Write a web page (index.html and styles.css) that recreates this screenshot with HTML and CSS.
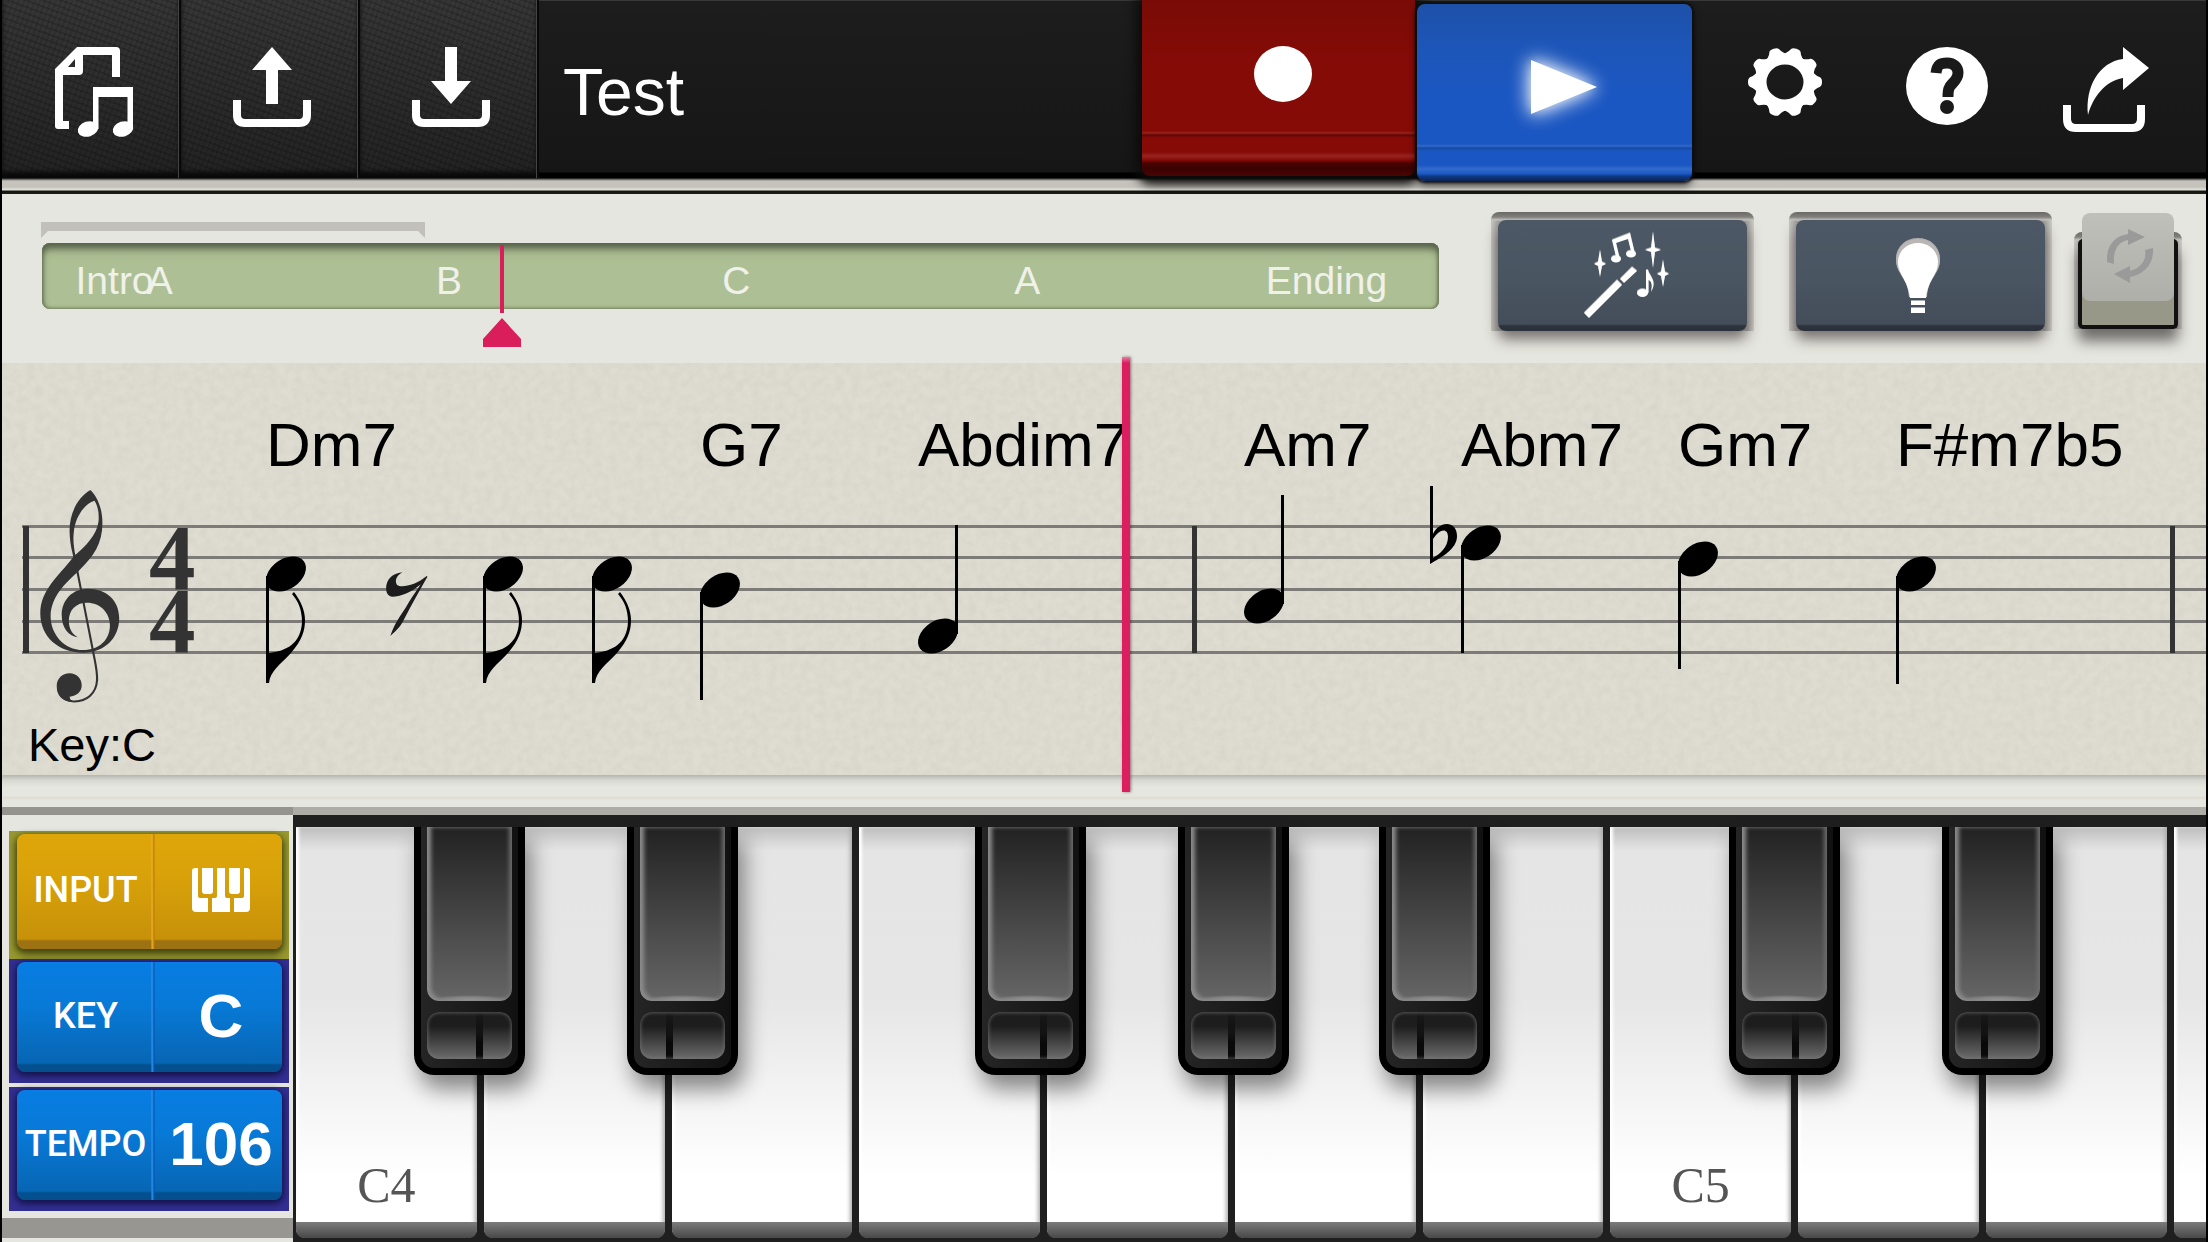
FILE: index.html
```html
<!DOCTYPE html>
<html lang="en">
<head>
<meta charset="utf-8">
<meta name="viewport" content="width=device-width, initial-scale=1">
<title>Test</title>
<link rel="stylesheet" href="styles.css">
</head>
<body>
<div class="app">
  <header class="toolbar">
    <button class="tool leather" aria-label="Songs">
      <svg width="80" height="90" viewBox="-2 0 80 90" fill="#fff">
        <path fill-rule="evenodd" d="M0 22 L22 0 H61 q4 0 4 4 V30 H57 V8 H28 V24 q0 4 -4 4 H8 V74 H14 V82 H3 q-3 0 -3 -3 Z M13 20 H20 V12 Z"/>
        <path d="M38 40 H78 V82 H72.500 V50 H43.500 V82 H38 Z"/>
        <ellipse cx="33" cy="82" rx="10.500" ry="7.500" transform="rotate(-18 33 82)"/>
        <ellipse cx="68" cy="82" rx="10.500" ry="7.500" transform="rotate(-18 68 82)"/>
      </svg>
    </button>
    <button class="tool leather" aria-label="Upload">
      <svg width="78" height="80" viewBox="0 0 78 80" fill="#fff">
        <path d="M39 0 L59 23 H45 V57 H33 V23 H19 Z"/>
        <path d="M4 53 V68 q0 8 8 8 H66 q8 0 8 -8 V53" fill="none" stroke="#fff" stroke-width="8"/>
      </svg>
    </button>
    <button class="tool leather" aria-label="Download">
      <svg width="78" height="80" viewBox="0 0 78 80" fill="#fff">
        <path d="M33 0 H45 V34 H59 L39 57 L19 34 H33 Z"/>
        <path d="M4 53 V68 q0 8 8 8 H66 q8 0 8 -8 V53" fill="none" stroke="#fff" stroke-width="8"/>
      </svg>
    </button>
    <h1 class="song-title">Test</h1>
    <button class="transport record" aria-label="Record">
      <svg width="58" height="56" viewBox="0 0 58 56"><ellipse cx="29" cy="28" rx="29" ry="28" fill="#fff"/></svg>
    </button>
    <button class="transport play" aria-label="Play">
      <svg class="glow" width="66" height="54" viewBox="0 0 66 54"><path d="M0 0 L66 27 L0 54 Z" fill="#fff"/></svg>
    </button>
    <nav class="menu">
      <button class="tool" aria-label="Settings">
        <svg width="74" height="70" viewBox="-37 -37 74 74" preserveAspectRatio="none">
          <defs><path id="tooth" d="M22 -13 L29 -9 Q32 -6 35 -5 Q37 -4 37 0 Q37 4 35 5 Q32 6 29 9 L22 13 Z" fill="#fff"/></defs>
          <circle r="24.500" fill="none" stroke="#fff" stroke-width="12"/>
          <use href="#tooth"/><use href="#tooth" transform="rotate(36)"/><use href="#tooth" transform="rotate(72)"/><use href="#tooth" transform="rotate(108)"/><use href="#tooth" transform="rotate(144)"/><use href="#tooth" transform="rotate(180)"/><use href="#tooth" transform="rotate(216)"/><use href="#tooth" transform="rotate(252)"/><use href="#tooth" transform="rotate(288)"/><use href="#tooth" transform="rotate(324)"/>
        </svg>
      </button>
      <button class="tool" aria-label="Help">
        <svg width="82" height="78" viewBox="0 0 82 78">
          <ellipse cx="41" cy="39" rx="41" ry="39" fill="#fff"/>
          <path d="M30 26 C31 17 35 16 41 16 C48 16 52 20 52 26 C52 31 49 34 46 37 C43 40 42 42 42 50" fill="none" stroke="#1a1a1a" stroke-width="11"/>
          <ellipse cx="41" cy="60" rx="7" ry="7" fill="#1a1a1a"/>
        </svg>
      </button>
      <button class="tool" aria-label="Share">
        <svg width="92" height="86" viewBox="0 0 92 86">
          <path d="M60 0 L86 21 L60 43 V31 C42 34 30 50 25 68 C22 40 36 15 60 12 Z" fill="#fff"/>
          <path d="M4 58 V72 q0 9 9 9 H69 q9 0 9 -9 V58" fill="none" stroke="#fff" stroke-width="8"/>
        </svg>
      </button>
    </nav>
  </header>

  <section class="controls">
    <div class="timeline">
      <svg class="loop-range" width="384" height="16" viewBox="0 0 384 16"><path d="M0 0 H384 V16 L377 9 H7 L0 16 Z" fill="#c1c0ba"/></svg>
      <div class="track">
        <span class="part" style="left:2.4%">Intro</span>
        <span class="part" style="left:7.5%">A</span>
        <span class="part" style="left:28.2%">B</span>
        <span class="part" style="left:48.7%">C</span>
        <span class="part" style="left:69.6%">A</span>
        <span class="part" style="left:87.6%">Ending</span>
        <svg class="marker" style="left:32.9%" width="40" height="104" viewBox="0 0 40 104"><path d="M18 2 H22 V70 H18 Z M20 75 L39 96 V105 H1 V96 Z" fill="#d91e5b"/></svg>
      </div>
    </div>
    <div class="slot">
      <button class="pad" aria-label="Arrange">
        <svg width="78" height="88" viewBox="0 0 78 88" fill="#fff">
          <path d="M0 81 L33 48 L38 53 L5 86 Z M36 47 L48 35 L53 39 L40 51 Z"/>
          <path d="M28 8 L46 1 L51 22 L48 23 L44 7 L32 11 L36 28 L33 29 Z"/>
          <ellipse cx="32" cy="27" rx="5" ry="3.500"/><ellipse cx="47" cy="22" rx="5" ry="3.500"/>
          <path d="M69 0 L71 16 L77 18 L71 20 L69 36 L67 20 L61 18 L67 16 Z M16 18 L18 30 L22 32 L18 34 L16 45 L14 34 L10 32 L14 30 Z M79 28 L81 40 L85 42 L81 44 L79 55 L77 44 L73 42 L77 40 Z"/>
          <path d="M62 38 H64 C65 44 74 49 67 60 C69 52 67 49 64.500 48 V61 H62 Z"/><ellipse cx="58.500" cy="61" rx="5.500" ry="4"/>
        </svg>
      </button>
    </div>
    <div class="slot">
      <button class="pad" aria-label="Hint">
        <svg width="50" height="76" viewBox="0 0 50 76">
          <path d="M22 1 C9 1 0 10 0 22 C0 36 12 40 13 59 H31 C32 40 44 36 44 22 C44 10 35 1 22 1 Z" fill="#b9b6b5"/>
          <path d="M22 5 C10 5 2 14 2 24 C2 37 12 41 14 60 H30 C32 41 42 37 42 24 C42 14 34 5 22 5 Z M15 63 H29 V67 H15 Z M15 70 H29 V75 H15 Z" fill="#fff"/>
        </svg>
      </button>
    </div>
    <div class="slot small">
      <button class="toggle" aria-label="Repeat">
        <span class="cap">
          <svg width="46" height="54" viewBox="0 0 46 54" fill="#9a9a9a">
            <path d="M0 33 C-1 16 8 7 21 5 V0 L38 8 L21 16 V11 C11 13 6 21 7 35 Z"/>
            <path d="M46 19 C47 36 37 45 23 48 V54 L7 45 L23 37 V42 C34 39 40 31 38 21 Z"/>
          </svg>
        </span>
      </button>
    </div>
  </section>

  <main class="score">
    <svg class="paper" width="100%" height="100%" aria-hidden="true">
      <filter id="grain" x="0" y="0" width="100%" height="100%">
        <feTurbulence type="fractalNoise" baseFrequency="0.12" numOctaves="3" seed="4"/>
        <feColorMatrix values="0 0 0 0 0.5  0 0 0 0 0.49  0 0 0 0 0.43  0.35 0 0 0 -0.1"/>
      </filter>
      <rect width="100%" height="100%" filter="url(#grain)"/>
    </svg>
    <svg class="staff" width="100%" height="412" aria-hidden="true">
      <defs>
        <ellipse id="head" cx="20" cy="0" rx="22" ry="15" transform="rotate(-35 20 0)"/>
        <g id="eighth">
          <use href="#head"/>
          <path d="M0 2 H3 V79 C20 77 35 70 36 48 C36 35 32 27 26 20 L28 18 C35 27 39 37 39 46 C39 57 36 66 25 79 C14 91 4 97 3 109 H0 Z"/>
        </g>
        <g id="down"><use href="#head"/><path d="M0 2 H3 V110 H0 Z"/></g>
        <g id="up"><use href="#head"/><path d="M37 -2 H40 V-111 H37 Z"/></g>
      </defs>
      <g fill="#7c7b77">
        <rect x="20" y="162" width="100%" height="3"/><rect x="20" y="193" width="100%" height="3"/><rect x="20" y="225" width="100%" height="3"/><rect x="20" y="257" width="100%" height="3"/><rect x="20" y="288" width="100%" height="3"/>
      </g>
      <g fill="#333">
        <rect x="21" y="163" width="6" height="127"/><rect x="1190" y="163" width="5" height="127"/><rect x="2168" y="163" width="5" height="127"/>
        <text class="meter" x="147" y="226">4</text>
        <text class="meter" x="147" y="289">4</text>
        <g transform="translate(-1 37) scale(.3571 .3333)">
          <path fill-rule="evenodd" d="M250 270 C215 292 191 340 192 395 C193 430 199 455 203 470 C160 530 110 570 110 640 C110 710 160 758 230 758 C290 758 331 715 331 655 C331 600 295 566 243 566 C200 566 170 600 170 645 C170 685 190 708 215 712 C198 700 190 685 190 662 C190 630 210 608 240 608 C280 608 305 640 305 675 C305 720 275 750 230 750 C175 750 139 700 139 650 C139 590 180 550 218 512 C260 470 284 430 284 370 C284 325 270 290 250 270 Z M262 302 C272 320 275 340 273 365 C268 405 235 440 208 465 C204 440 201 420 204 395 C208 350 235 310 262 302 Z"/>
          <path d="M204 460 L258 755 C263 785 270 810 269 840 C267 880 240 907 200 904 C180 902 160 888 160 860" fill="none" stroke="#333" stroke-width="6"/>
          <path d="M192 820 C212 820 226 836 226 856 C226 876 212 888 192 890 L196 905 C170 903 156 885 156 858 C156 836 172 820 192 820 Z"/>
        </g>
      </g>
      <path transform="translate(-2 37) scale(.3571 .3333)" fill="#1c1c1c" d="M1127 517 C1108 528 1105 545 1112 555 C1125 565 1165 555 1195 528 L1197 530 C1165 590 1140 640 1128 665 C1118 685 1105 695 1093 708 C1105 670 1120 650 1135 625 C1148 600 1165 575 1178 553 C1150 580 1120 590 1098 590 C1082 588 1080 570 1082 555 C1088 530 1105 520 1127 517 Z"/>
      <use href="#eighth" x="264" y="211"/><use href="#eighth" x="481" y="211"/><use href="#eighth" x="590" y="211"/>
      <use href="#down" x="698" y="227"/><use href="#up" x="916" y="273"/>
      <use href="#up" x="1242" y="243"/><use href="#down" x="1459" y="180"/><use href="#down" x="1676" y="196"/><use href="#down" x="1894" y="211"/>
      <path fill-rule="evenodd" d="M1428 123 H1431 V171 C1438 157 1455 158 1455 173 C1455 186 1440 194 1428 201 Z M1431 176 V195 C1438 191 1446 184 1446 174 C1446 164 1437 166 1431 176 Z"/>
    </svg>
    <ol class="chords">
      <li>Dm7</li><li>G7</li><li>Abdim7</li><li>Am7</li><li>Abm7</li><li>Gm7</li><li>F#m7b5</li>
    </ol>
    <p class="key-label">Key:C</p>
    <div class="playhead"></div>
  </main>
  <div class="ledge"></div>

  <section class="bottom">
    <aside class="settings">
      <div class="well amber"><button class="setting"><span class="name">INPUT</span><span class="value"><svg width="58" height="44" viewBox="0 0 58 44" fill="#fff" role="img" aria-label="Keyboard"><path d="M3 0 H6 V28 q0 2 2 2 H16 V44 H4 q-4 0 -4 -4 V3 q0 -3 3 -3 Z M10 0 H21 V23 q0 3 -3 3 H13 q-3 0 -3 -3 Z M25 0 H33 V28 q0 2 2 2 H38 V44 H20 V30 H23 q2 0 2 -2 Z M37 0 H48 V23 q0 3 -3 3 H40 q-3 0 -3 -3 Z M52 0 H55 q3 0 3 3 V40 q0 4 -4 4 H42 V30 H50 q2 0 2 -2 Z"/></svg></span></button></div>
      <div class="well blue"><button class="setting"><span class="name">KEY</span><span class="value">C</span></button></div>
      <div class="well blue spaced"><button class="setting"><span class="name">TEMPO</span><span class="value">106</span></button></div>
      <div class="rail"></div>
    </aside>
    <div class="piano">
      <div class="whites">
        <button class="white">C4</button><button class="white" aria-label="D4"></button><button class="white" aria-label="E4"></button><button class="white" aria-label="F4"></button><button class="white" aria-label="G4"></button><button class="white" aria-label="A4"></button><button class="white" aria-label="B4"></button><button class="white">C5</button><button class="white" aria-label="D5"></button><button class="white" aria-label="E5"></button><button class="white" aria-label="F5"></button>
      </div>
      <button class="black" style="left:6.3%;--seam:64%" aria-label="C#4"></button>
      <button class="black" style="left:17.45%;--seam:33%" aria-label="D#4"></button>
      <button class="black" style="left:35.65%;--seam:67%" aria-label="F#4"></button>
      <button class="black" style="left:46.25%;--seam:48%" aria-label="G#4"></button>
      <button class="black" style="left:56.75%;--seam:32%" aria-label="A#4"></button>
      <button class="black" style="left:75.05%;--seam:64%" aria-label="C#5"></button>
      <button class="black" style="left:86.2%;--seam:33%" aria-label="D#5"></button>
    </div>
  </section>
</div>
</body>
</html>
```
FILE: styles.css
```css
* { box-sizing: border-box; }
body { margin: 0; background: #000; font-family: "Liberation Sans", Arial, sans-serif; }
button { margin: 0; padding: 0; border: 0; background: none; color: inherit; font: inherit; cursor: pointer; }
svg { display: block; flex: none; }

.app {
  display: flex;
  flex-direction: column;
  min-height: 100vh;
  padding: 0 2px;
  overflow: hidden;
  background: #e5e6df;
  box-shadow: inset 2px 0 #000, inset -2px 0 #000;
}

/* Toolbar */
.toolbar {
  position: relative;
  z-index: 2;
  display: flex;
  align-items: flex-start;
  height: 194px;
  background:
    linear-gradient(#393939, #393939) 0 0 / 100% 1px no-repeat,
    linear-gradient(#1d1d1d, #161616 172px, #000 173px, #000 178px, #55534e 179px, #c6c4bd 181px, #c4c2bb 187px, #e5e5de 190px, #12120f 191px, #1d1c18 194px);
}
.tool { display: flex; justify-content: center; flex: none; width: 162px; height: 178px; padding-top: 47px; }
.leather {
  width: 179px;
  padding-left: 4px;
  border-right: 2px solid #080808;
  box-shadow: inset -1px 0 #444, inset 0 -6px 4px #0a0a0a;
  background:
    repeating-linear-gradient(20deg, rgba(0,0,0,.16) 0 2px, transparent 2px 6px),
    repeating-linear-gradient(110deg, rgba(0,0,0,.1) 0 2px, transparent 2px 5px),
    linear-gradient(#363636, #222);
}
.leather svg { overflow: visible; }
.song-title {
  flex: 1;
  min-width: 0;
  margin: 0;
  padding: 56px 24px 0;
  color: #fff;
  font-size: 66px;
  font-weight: 400;
  line-height: 72px;
}
.transport { display: flex; justify-content: center; flex: none; }
.record {
  width: 273px;
  height: 176px;
  padding: 46px 0 0 8px;
  border-radius: 0 0 8px 8px;
  background: linear-gradient(#790b06, #850b07 60px, #860b07 131px, #9a211c 133px, #5e0805 135px, #860b07 138px, #860b07 152px, #96241f 156px, #860b07 160px, #4c0302 163px, #380201 168px, #4a0503 176px);
  box-shadow: 0 0 12px 6px #0d0d0d, 0 8px 8px rgba(0,0,0,.6);
}
.play {
  position: relative;
  width: 275px;
  height: 177px;
  margin: 4px 0 0 2px;
  padding: 56px 0 0 18px;
  border-radius: 8px;
  background: linear-gradient(#1d50a8, #1d56b8 40px, #1b57c2 90px, #1b57c2 140px, #2f69cb 142px, #154aa4 144px, #1b57c2 147px, #1b57c2 161px, #326bcd 165px, #1b57c2 170px, #0f3a86 172px, #0c2554 177px);
  box-shadow: 0 0 3px 2px #0d0d0d, 0 6px 8px rgba(0,0,0,.5);
}
.glow { overflow: visible; filter: drop-shadow(0 0 10px rgba(255,255,255,.8)) drop-shadow(0 0 6px rgba(255,255,255,.6)); }
.menu { display: flex; padding: 0 16px 0 12px; }

/* Timeline and pads */
.controls { display: flex; align-items: flex-start; height: 169px; padding: 18px 24px 0 39px; }
.timeline { flex: 1; min-width: 0; padding-top: 10px; margin-right: 52px; }
.track {
  position: relative;
  height: 66px;
  margin: 5px 0 0 1px;
  border-radius: 8px;
  background: #adbf94;
  box-shadow: inset 0 6px 6px -1px #59644b, inset 1px 0 4px #6f7c5e, inset 0 10px 12px -4px #8b9a76, inset -1px 0 3px #6f7c5e;
}
.part { position: absolute; top: 16px; color: #f0f1ea; font-size: 39px; line-height: 44px; }
.marker { position: absolute; top: 0; transform: translateX(-50%); }
.slot {
  flex: none;
  width: 263px;
  height: 119px;
  margin-right: 35px;
  padding: 8px 7px 0;
  border-radius: 8px 8px 0 0;
  background: linear-gradient(#6a6966, #83827f 5px, #c9c8c3 8px, transparent 9px), linear-gradient(90deg, #c9c8c4, #a5a4a0 7px, #a5a4a0 calc(100% - 7px), #cfcec9);
}
.pad {
  display: flex;
  align-items: center;
  justify-content: center;
  width: 100%;
  height: 111px;
  border-radius: 8px;
  background: linear-gradient(#4c5865, #4a5562 60px, #444d5a 104px, #2c333d 106px, #2a313b);
  box-shadow: 0 8px 14px rgba(70,60,60,.7);
}
.pad svg { overflow: visible; filter: drop-shadow(0 -1px 0 #aaa); }
.slot.small { width: 108px; height: 97px; margin: 20px 0 0 -13px; padding: 7px 4px 0; }
.toggle {
  display: block;
  width: 100%;
  height: 90px;
  border-radius: 5px;
  border: 4px solid #111;
  border-top: 0;
  background: #989888;
  box-shadow: 0 12px 14px rgba(60,55,55,.7);
}
.cap {
  display: flex;
  justify-content: center;
  height: 88px;
  margin-top: -50px;
  padding: 16px 0 0 4px;
  border-radius: 8px;
  background: linear-gradient(#bfc0b9, #aeafa9);
}

/* Score */
.score {
  position: relative;
  height: 412px;
  background: #dfddd2;
}
.paper { position: absolute; inset: 0; }
.staff { position: absolute; inset: 0; }
.meter { font: bold 93px "Liberation Serif", "Times New Roman", serif; }
.chords {
  position: relative;
  display: grid;
  grid-template-columns: 434px 218px 326px 217px 217px 218px 1fr;
  margin: 0;
  padding: 46px 0 0 264px;
  list-style: none;
  color: #000;
  font-size: 62px;
  line-height: 72px;
  white-space: nowrap;
}
.key-label { position: absolute; left: 26px; bottom: 4px; margin: 0; font-size: 47px; line-height: 52px; }
.playhead {
  position: absolute;
  top: -6px;
  left: 50.8%;
  width: 8px;
  height: 435px;
  background: linear-gradient(#e77ba3, #dc1e60 6px);
  box-shadow: 1px 0 3px rgba(60,0,20,.5);
}
.ledge { height: 32px; background: linear-gradient(#b5b5b0, #d8d8d2 5px, #e5e6df 12px, #e5e6df 21px, #dddcd2 23px, #e5e6df 25px); }

/* Bottom area */
.bottom { display: flex; flex: 1; min-height: 435px; }
.settings {
  display: flex;
  flex-direction: column;
  flex: none;
  width: 291px;
  padding-top: 16px;
  border-top: 8px solid #94938d;
  color: #fff;
}
.well { height: 124px; margin: 0 4px 0 7px; padding: 3px 7px 0 8px; }
.well.amber { height: 128px; background: #97982f; }
.well.blue { background: #332f92; }
.well.spaced { margin-top: 4px; }
.setting {
  display: grid;
  grid-template-columns: 137px 1fr;
  align-items: center;
  width: 100%;
  height: 110px;
  padding-bottom: 3px;
  border-radius: 8px;
  background:
    linear-gradient(90deg, transparent 134px, #2a9be6 135px, #0a4fc0 137px, transparent 138px),
    linear-gradient(#087de2, #0879d6 45px, #0766b4 101px, #04508f 103px, #04508f);
  box-shadow: 0 2px 6px 2px rgba(10,10,50,.75);
}
.amber .setting {
  height: 115px;
  background:
    linear-gradient(90deg, transparent 134px, #e9b32c 135px, #c57800 137px, transparent 138px),
    linear-gradient(#dfa60a, #d9a20a 40px, #c79109 105px, #9c7212 107px, #9c7212);
  box-shadow: 0 3px 6px 2px rgba(40,40,0,.75);
}
.name { font-family: Roboto, sans-serif; font-size: 36px; font-weight: 500; text-align: center; }
.value { display: flex; justify-content: center; padding-left: 6px; font-size: 62px; font-weight: 700; line-height: 72px; }
.rail { height: 20px; margin-top: 7px; background: #979690; }

.piano {
  position: relative;
  flex: 1;
  min-width: 0;
  overflow: hidden;
  padding: 12px 0 4px 3px;
  border-top: 8px solid #adaca7;
  background: #1f1f1f;
}
.whites { display: flex; height: 100%; overflow: hidden; }
.white {
  position: relative;
  display: flex;
  flex-direction: column;
  justify-content: flex-end;
  flex: 0 0 calc(9.83% - 7px);
  margin-right: 7px;
  border-radius: 0 0 10px 10px;
  padding-bottom: 27px;
  background: linear-gradient(#bdbdbd, #d6d6d6 14px, #e5e5e5 24px, #e6e6e6 170px, #fff 350px);
  box-shadow: inset -4px 0 4px -2px #aaa, inset 3px 0 3px #fff;
  color: #555;
  font-family: "Liberation Serif", "Times New Roman", serif;
  font-size: 50px;
  line-height: 52px;
  text-align: center;
}
/* front face of the key, below the playing surface */
.white::after {
  content: "";
  position: absolute;
  inset: auto 0 0;
  height: 16px;
  border-radius: 0 0 8px 8px;
  background: linear-gradient(#7c7c7c, #484848);
}
.black {
  position: absolute;
  top: 12px;
  width: 111px;
  height: 248px;
  border: 7px solid #000;
  border-top: 0;
  border-radius: 0 0 20px 20px;
  background: linear-gradient(90deg, #252525, #111);
  box-shadow: 6px 14px 22px rgba(0,0,0,.45);
}
.black::before {
  content: "";
  position: absolute;
  inset: 0 6px 67px;
  border-radius: 0 0 12px 12px;
  background: radial-gradient(ellipse 40px 6px at 50% 100%, #bbb, transparent), linear-gradient(#222, #666);
  box-shadow: inset 4px -2px 4px #8c8c8c, inset -3px 0 4px #6c6c6c;
}
.black::after {
  content: "";
  position: absolute;
  inset: 185px 6px 9px;
  border-radius: 12px;
  background:
    linear-gradient(rgba(17,17,17,.2), #090909 30px) var(--seam) 0 / 7px 100% no-repeat,
    linear-gradient(#1d1d1d 14px, #6c6c6c);
  box-shadow: inset 0 0 4px #777;
}
```
